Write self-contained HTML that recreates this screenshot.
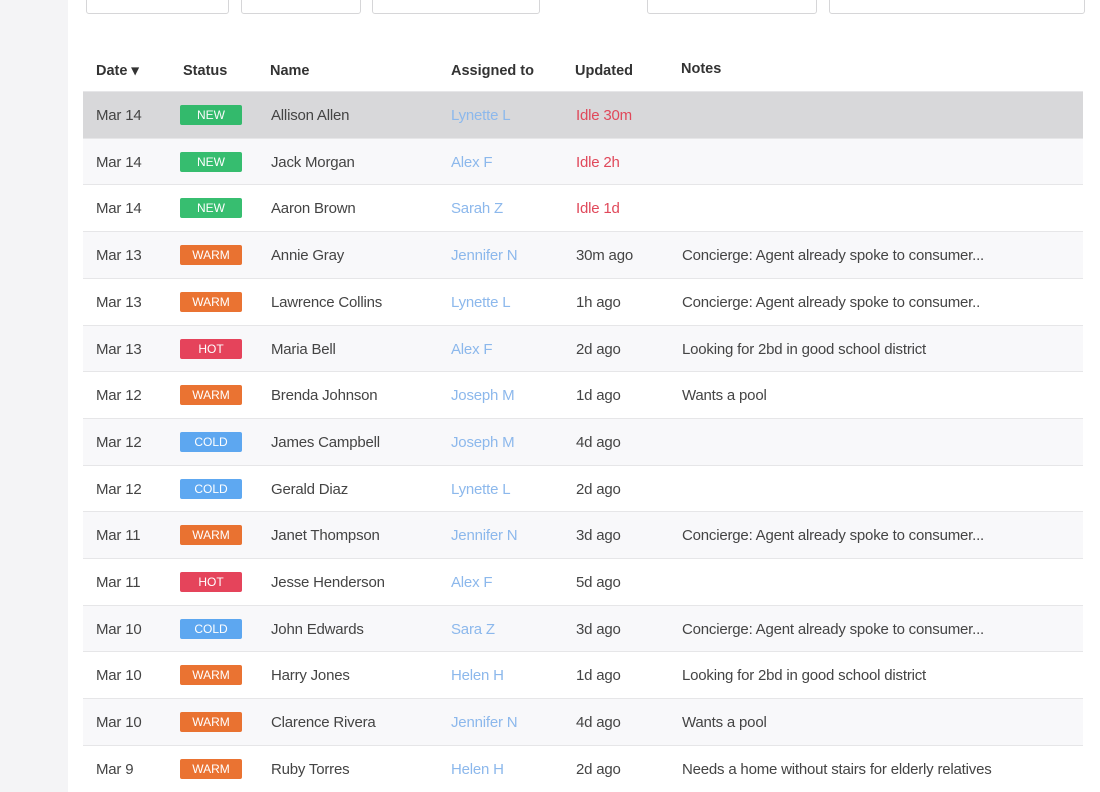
<!DOCTYPE html>
<html><head><style>
body{margin:0;width:1100px;height:792px;overflow:hidden;background:#fff;font-family:"Liberation Sans",sans-serif;position:relative}
.side{position:absolute;left:0;top:0;width:68px;height:792px;background:#f4f4f6}
.btn{position:absolute;top:-10px;height:22px;border:1px solid #d6d6d8;border-radius:3px;background:#fff}
.hdr{position:absolute;top:63px;font-size:14.5px;font-weight:bold;color:#333}
.row{position:absolute;left:83px;width:1000px;height:46px;border-top:1px solid #e6e6e8;font-size:15px;color:#444}
.row span{position:absolute;top:15px;white-space:nowrap;letter-spacing:-0.2px}
.b{position:absolute;left:97px;top:13px;width:62px;height:20px;color:#fff;font-size:12px;text-align:center;line-height:20px;border-radius:2px;opacity:.9}
.NEW{background:#22b761}.WARM{background:#e8641c}.HOT{background:#e3304a}.COLD{background:#4d9ff0}
.a{color:#8cb8ec}.r{color:#e0485a}
</style></head><body>
<div class="side"></div>
<div class="btn" style="left:86px;width:141px"></div>
<div class="btn" style="left:241px;width:118px"></div>
<div class="btn" style="left:372px;width:166px"></div>
<div class="btn" style="left:647px;width:168px"></div>
<div class="btn" style="left:829px;width:254px"></div>
<div class="hdr" style="left:96px">Date ▾</div>
<div class="hdr" style="left:183px">Status</div>
<div class="hdr" style="left:270px">Name</div>
<div class="hdr" style="left:451px">Assigned to</div>
<div class="hdr" style="left:575px">Updated</div>
<div class="hdr" style="left:681px;top:61px">Notes</div>
<div id="t"></div>
<script>
var d=[["Mar 14","NEW","Allison Allen","Lynette L","Idle 30m",""],
["Mar 14","NEW","Jack Morgan","Alex F","Idle 2h",""],
["Mar 14","NEW","Aaron Brown","Sarah Z","Idle 1d",""],
["Mar 13","WARM","Annie Gray","Jennifer N","30m ago","Concierge: Agent already spoke to consumer..."],
["Mar 13","WARM","Lawrence Collins","Lynette L","1h ago","Concierge: Agent already spoke to consumer.."],
["Mar 13","HOT","Maria Bell","Alex F","2d ago","Looking for 2bd in good school district"],
["Mar 12","WARM","Brenda Johnson","Joseph M","1d ago","Wants a pool"],
["Mar 12","COLD","James Campbell","Joseph M","4d ago",""],
["Mar 12","COLD","Gerald Diaz","Lynette L","2d ago",""],
["Mar 11","WARM","Janet Thompson","Jennifer N","3d ago","Concierge: Agent already spoke to consumer..."],
["Mar 11","HOT","Jesse Henderson","Alex F","5d ago",""],
["Mar 10","COLD","John Edwards","Sara Z","3d ago","Concierge: Agent already spoke to consumer..."],
["Mar 10","WARM","Harry Jones","Helen H","1d ago","Looking for 2bd in good school district"],
["Mar 10","WARM","Clarence Rivera","Jennifer N","4d ago","Wants a pool"],
["Mar 9","WARM","Ruby Torres","Helen H","2d ago","Needs a home without stairs for elderly relatives"]];
var h="";d.forEach(function(x,i){var top=91+i*46.7;var bg=i==0?"#d8d8da":(i%2?"#f8f8fa":"#fff");
h+='<div class="row" style="top:'+top+'px;background:'+bg+'"><span style="left:13px">'+x[0]+'</span><div class="b '+x[1]+'">'+x[1]+'</div><span style="left:188px">'+x[2]+'</span><span class="a" style="left:368px">'+x[3]+'</span><span class="'+(i<3?'r':'')+'" style="left:493px">'+x[4]+'</span><span style="left:599px">'+x[5]+'</span></div>';});
document.getElementById("t").innerHTML=h;
</script>
</body></html>
